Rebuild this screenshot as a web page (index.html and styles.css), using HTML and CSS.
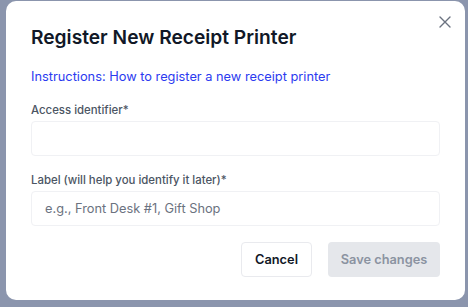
FILE: index.html
```html
<!DOCTYPE html>
<html lang="en">
<head>
<title>Register New Receipt Printer</title>
<meta charset="utf-8">
<link rel="stylesheet" href="styles.css">
</head>
<body>
<div class="backdrop">
  <div class="modal">
    <button class="close" type="button" aria-label="Close">
      <svg width="12" height="12" viewBox="0 0 12 12"><path d="M1 1L11 11M11 1L1 11" stroke="#6b7280" stroke-width="1.4" stroke-linecap="round"/></svg>
    </button>
    <h2 class="title">Register New Receipt Printer</h2>
    <a class="instructions" href="#">Instructions: How to register a new receipt printer</a>
    <div class="field">
      <label class="label">Access identifier*</label>
      <input class="input" type="text">
    </div>
    <div class="field">
      <label class="label">Label (will help you identify it later)*</label>
      <input class="input" type="text" placeholder="e.g., Front Desk #1, Gift Shop">
    </div>
    <div class="actions">
      <button class="btn btn-cancel" type="button">Cancel</button>
      <button class="btn btn-save" type="button" disabled>Save changes</button>
    </div>
  </div>
</div>
</body>
</html>
```
FILE: styles.css
```css
* { margin: 0; padding: 0; box-sizing: border-box; }
html, body { margin: 0; padding: 0; }
body { font-family: 'Inter', 'Liberation Sans', sans-serif; background-color: #8b95ad; color: #111827; }
.backdrop { width: 468px; height: 307px; padding: 1px 2px 7px 6px; }
.modal { position: relative; width: 459px; height: 299px; background: #fff; border-radius: 10px; padding: 22px 25px 0 25px; display: flex; flex-direction: column; }
.close { position: absolute; top: 15px; right: 14px; width: 12px; height: 12px; border: 0; background: transparent; display: flex; }
.title { font-size: 19.2px; line-height: 28px; font-weight: 600; color: #111827; }
.instructions { margin-top: 16px; font-size: 12.8px; line-height: 20px; color: #2b3bf0; text-decoration: none; }
.field { display: flex; flex-direction: column; }
.field:first-of-type { margin-top: 15px; }
.field + .field { margin-top: 16px; }
.label { font-size: 11.4px; line-height: 16px; font-weight: 500; color: #4b5563; }
.input { margin-top: 3px; height: 35px; width: 100%; border: 1px solid #f0f1f4; border-radius: 4px; padding: 0 13px; font-family: inherit; font-size: 12.8px; color: #111827; outline: none; }
.input::placeholder { color: #6b7280; }
.actions { margin-top: 16px; display: flex; justify-content: flex-end; gap: 16px; }
.btn { height: 35px; border-radius: 4px; font-family: inherit; font-size: 12.8px; font-weight: 600; padding: 0; white-space: nowrap; }
.btn-cancel { width: 71px; background: #fff; color: #111827; border: 1px solid #e9eaee; }
.btn-save { width: 112px; background: #e5e7eb; color: #8b93a1; border: 0; }
```
